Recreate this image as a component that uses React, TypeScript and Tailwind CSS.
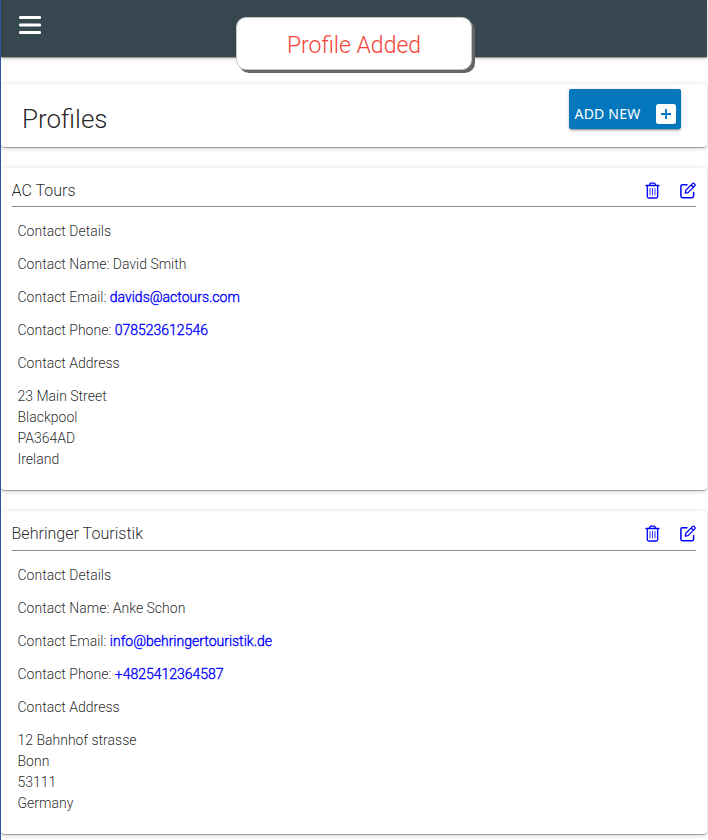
import React from "react";

interface Profile {
  company: string;
  name: string;
  email: string;
  phone: string;
  address: string[];
}

const profiles: Profile[] = [
  {
    company: "AC Tours",
    name: "David Smith",
    email: "davids@actours.com",
    phone: "078523612546",
    address: ["23 Main Street", "Blackpool", "PA364AD", "Ireland"],
  },
  {
    company: "Behringer Touristik",
    name: "Anke Schon",
    email: "info@behringertouristik.de",
    phone: "+4825412364587",
    address: ["12 Bahnhof strasse", "Bonn", "53111", "Germany"],
  },
];

const elevation =
  "shadow-[0px_2px_1px_-1px_rgba(0,0,0,0.2),0px_1px_1px_0px_rgba(0,0,0,0.14),0px_1px_5px_0px_rgba(0,0,0,0.2)]";

const linkStyle = "font-light text-[#0000ff] [-webkit-text-stroke:0.35px_#0000ff]";

function MenuIcon() {
  return (
    <svg viewBox="0 0 22 18" className="h-[18px] w-[22px]" fill="currentColor">
      <rect x="0" y="0" width="22" height="3" rx="1.2" />
      <rect x="0" y="7.5" width="22" height="3" rx="1.2" />
      <rect x="0" y="15" width="22" height="3" rx="1.2" />
    </svg>
  );
}

function AddIcon() {
  return (
    <svg viewBox="0 0 20 20" className="size-5">
      <rect width="20" height="20" rx="2.5" fill="white" />
      <path d="M10 5V15M5 10H15" stroke="#0277bd" strokeWidth="1.8" />
    </svg>
  );
}

function TrashIcon() {
  return (
    <svg
      viewBox="0 0 15 17"
      className="mr-5 h-[17px] w-[15px]"
      fill="none"
      stroke="currentColor"
      strokeWidth="1.3"
      strokeLinecap="round"
      strokeLinejoin="round"
    >
      <path d="M1 3.5H14M4.3 3.2L5.3 1.2H9.7L10.7 3.2" />
      <path d="M2.3 3.8V14.5Q2.3 16 3.8 16H11.2Q12.7 16 12.7 14.5V3.8" />
      <path d="M5 6.5V13M7.5 6.5V13M10 6.5V13" strokeWidth="0.8" />
    </svg>
  );
}

function EditIcon() {
  return (
    <svg
      viewBox="0 0 16 17"
      className="h-[17px] w-4"
      fill="none"
      stroke="currentColor"
      strokeWidth="1.5"
      strokeLinecap="round"
      strokeLinejoin="round"
    >
      <path d="M7 2.7H2.5Q.9 2.7 .9 4.3V14.1Q.9 15.7 2.5 15.7H12Q13.6 15.7 13.6 14.1V10.5" />
      <path d="M5.3 11.2L5.8 8.3L12.5 1.6Q13.4 .7 14.3 1.6L14.8 2.1Q15.7 3 14.8 3.9L8.1 10.6ZM11.2 3L13.4 5.2" strokeWidth="1.3" />
    </svg>
  );
}

function ProfileCard({ profile, className, headClass }: { profile: Profile; className: string; headClass: string }) {
  return (
    <section className={`mb-[21px] rounded-[4px] bg-white pr-[11px] pl-[10.5px] ${elevation} ${className}`}>
      <div className={`flex items-start justify-between border-b border-[#8c8c8c] pt-[11px] ${headClass}`}>
        <h2 className="text-[16px] leading-6 tracking-[0.03px]">{profile.company}</h2>
        <div className="flex pt-[3px] text-[#0000ff]">
          <TrashIcon />
          <EditIcon />
        </div>
      </div>
      <div className="flex flex-col gap-3 pt-[14px] pl-[6px] text-[14px] leading-[21px]">
        <p>Contact Details</p>
        <p>Contact Name: {profile.name}</p>
        <p>
          Contact Email: <a className={linkStyle}>{profile.email}</a>
        </p>
        <p>
          Contact Phone: <a className={linkStyle}>{profile.phone}</a>
        </p>
        <p>Contact Address</p>
        <div>
          {profile.address.map((line) => (
            <p key={line}>{line}</p>
          ))}
        </div>
      </div>
    </section>
  );
}

export default function App() {
  return (
    <div className="relative h-[840px] w-[708px] overflow-hidden border-l border-[#2f559f] bg-white pr-px font-[Roboto,sans-serif] font-light text-black/87">
      <header className={`flex h-[57px] items-start bg-[#37474f] pt-4 pl-[17.5px] text-white ${elevation}`}>
        <MenuIcon />
      </header>
      <section className={`mt-[27px] mb-[21px] flex h-[63px] items-start justify-between rounded-[4px] bg-white pr-[26px] pl-[21px] ${elevation}`}>
        <h1 className="pt-[18px] text-[26px] leading-[34px]">Profiles</h1>
        <button className="mt-[5px] flex h-10 w-28 items-center rounded-[2px] bg-[#0277bd] pt-[10px] pl-[5.5px] font-['Noto_Sans',sans-serif] text-[14px] font-normal tracking-[0.2px] text-white shadow-[0px_3px_1px_-2px_rgba(0,0,0,0.2),0px_2px_2px_0px_rgba(0,0,0,0.14),0px_1px_5px_0px_rgba(0,0,0,0.12)]">
          <span className="mt-[-2px] w-[81.5px] text-left">ADD NEW</span>
          <AddIcon />
        </button>
      </section>
      <ProfileCard profile={profiles[0]} className="h-[322px]" headClass="h-[39px]" />
      <ProfileCard profile={profiles[1]} className="h-[323px]" headClass="h-10" />
      <div className="absolute top-[17px] left-[235px] flex h-[53px] w-[236px] items-center justify-center rounded-[10px] border border-[#c4c4c4] bg-white pt-[5px] text-[23px] text-[#f44336] shadow-[3px_3px_0px_#666]">
        Profile Added
      </div>
    </div>
  );
}
